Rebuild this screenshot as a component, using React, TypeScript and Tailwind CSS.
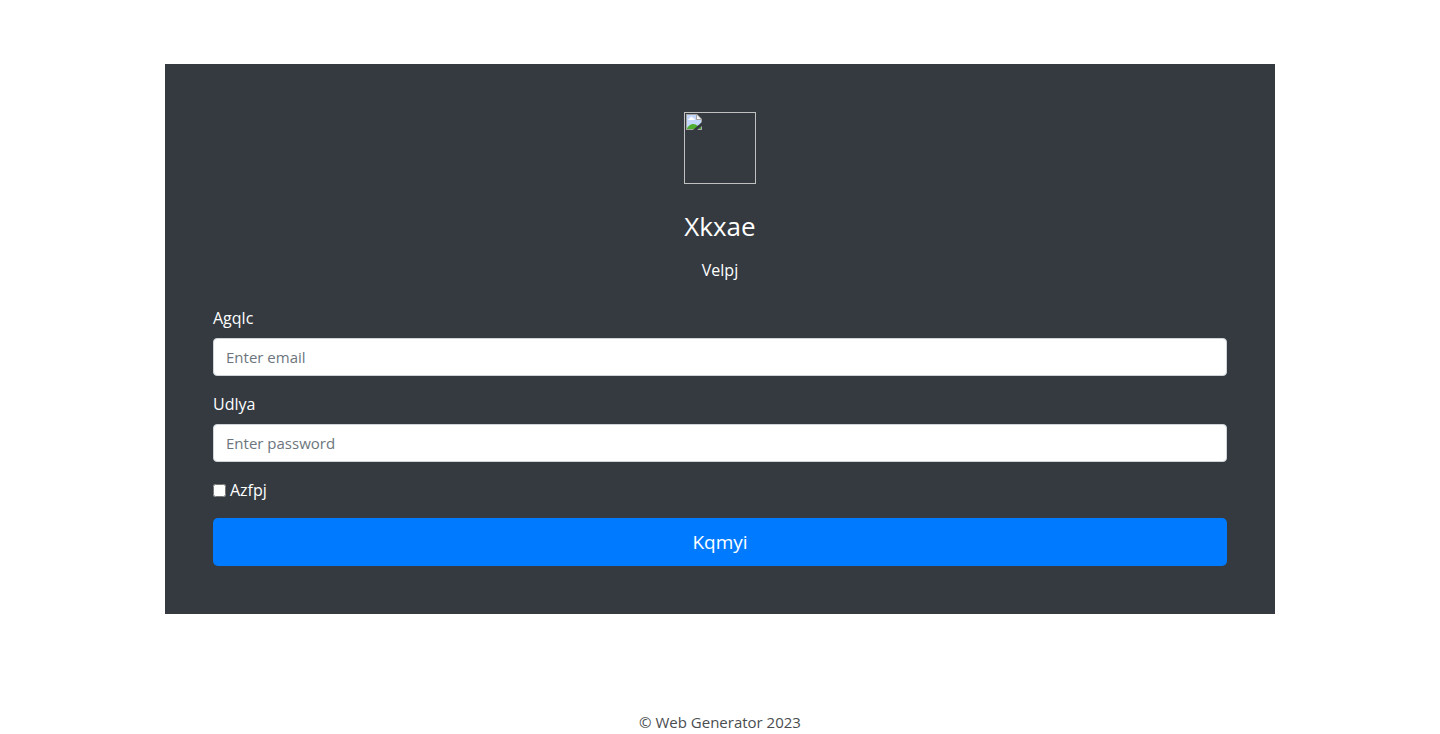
export default function App() {
  return (
    <div className="bg-white px-4 pt-16 font-['Open_Sans','Noto_Sans',sans-serif] text-base text-white">
      <main className="mx-auto max-w-[1110px] bg-[#343a40] p-12">
        <header className="flex flex-col items-center text-center">
          <svg className="size-18" viewBox="0 0 72 72" aria-hidden="true">
            <rect x="0.5" y="0.5" width="71" height="71" fill="none" stroke="#c0c0c0" />
            <path d="M2 2h11l5 5v11H2z" fill="#a5a5a5" />
            <path d="M3 3h9v5h5v9H3z" fill="#c3d6fb" />
            <path d="M5 7q0-1 1-1q1-3 3 0q2 0 2 2H4q0-1 1-1z" fill="#fff" />
            <path d="M13 3v4h4z" fill="#f4f4f4" />
            <path d="M3 17v-1q3-4 6-4q3 0 5 2l3 1v2z" fill="#4fae2f" />
            <path d="M18 10v4l-5 4H9z" fill="#343a40" />
          </svg>
          <h1 className="mt-6 text-[26px] leading-9">Xkxae</h1>
          <p className="mt-3 leading-7">Velpj</p>
        </header>
        <form className="mt-[22px]" onSubmit={(e) => e.preventDefault()}>
          <div className="mb-4">
            <label htmlFor="email" className="mb-2 block leading-6">Agqlc</label>
            <input id="email" type="email" placeholder="Enter email" className="block h-[38px] w-full rounded border border-[#ced4da] bg-white px-3 text-[15px] text-[#495057] placeholder:text-[#6c757d]" />
          </div>
          <div className="mb-4">
            <label htmlFor="password" className="mb-2 block leading-6">Udlya</label>
            <input id="password" type="password" placeholder="Enter password" className="block h-[38px] w-full rounded border border-[#ced4da] bg-white px-3 text-[15px] text-[#495057] placeholder:text-[#6c757d]" />
          </div>
          <label className="mb-4 flex items-center gap-1 leading-6">
            <input type="checkbox" className="size-[13px]" />
            Azfpj
          </label>
          <button type="submit" className="h-12 w-full rounded-[5px] bg-[#007bff] text-[19px]">Kqmyi</button>
        </form>
      </main>
      <footer className="mt-24 text-center text-[15px] leading-6 text-[#4a4d50]">© Web Generator 2023</footer>
    </div>
  );
}
